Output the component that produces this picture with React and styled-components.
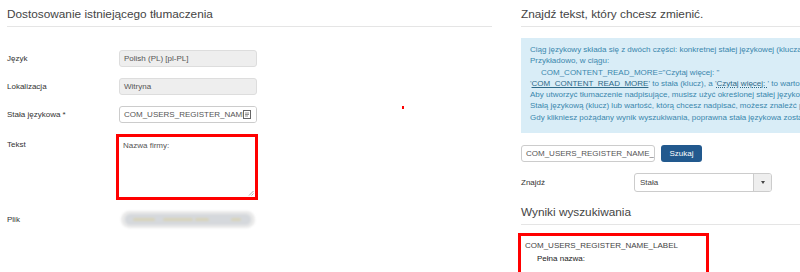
import React from "react";
import styled, { createGlobalStyle } from "styled-components";

const GlobalStyle = createGlobalStyle`
  html, body {
    margin: 0;
    padding: 0;
    background: #fff;
    width: 800px;
    height: 272px;
    overflow: hidden;
    font-family: "Liberation Sans", Arial, sans-serif;
  }
`;

const Page = styled.div`
  position: relative;
  display: flex;
  align-items: flex-start;
  padding-left: 7px;
  width: 1000px;
  height: 272px;
`;

const Column = styled.div`
  flex-shrink: 0;
  width: ${(p) => p.$width}px;
  margin-right: ${(p) => p.$gap || 0}px;
`;

const Heading = styled.h2`
  margin: ${(p) => p.$top || 0}px 0 0;
  padding: 7px 0 4px;
  font-size: 11.8px;
  line-height: 15px;
  font-weight: normal;
  color: #444;
  border-bottom: 1px solid #e5e5e5;
  white-space: nowrap;
`;

const Form = styled.div`
  display: flex;
  flex-direction: column;
  gap: 11px;
  margin-top: 23px;
`;

const Row = styled.div`
  display: flex;
  align-items: flex-start;
`;

const Label = styled.div`
  width: ${(p) => p.$width || 112}px;
  padding-top: ${(p) => p.$pad || 0}px;
  font-size: 8px;
  line-height: 17px;
  color: #333;
  flex-shrink: 0;
`;

const Input = styled.div`
  position: relative;
  box-sizing: border-box;
  width: ${(p) => p.$width || 138}px;
  height: 17px;
  padding: 0 4px;
  border: 1px solid ${(p) => (p.$readonly ? "#ddd" : "#ccc")};
  border-radius: 3px;
  background: ${(p) => (p.$readonly ? "#eee" : "#fff")};
  font-size: 8px;
  line-height: 15px;
  color: #555;
  white-space: nowrap;
  overflow: hidden;
`;

const InputIcon = styled.span`
  position: absolute;
  right: 0;
  top: 0;
  bottom: 0;
  width: 13px;
  display: flex;
  align-items: center;
  background: #fff;
`;

const TextArea = styled.div`
  position: relative;
  box-sizing: border-box;
  width: 142px;
  height: 66px;
  margin-left: -3px;
  padding: 3px 4px;
  border: 3px solid #f00;
  background: #fff;
  font-size: 8px;
  line-height: 11px;
  color: #555;
`;

const Grip = styled.svg`
  position: absolute;
  right: 1px;
  bottom: 1px;
`;

const Blurred = styled.div`
  box-sizing: border-box;
  width: 134px;
  height: 17px;
  margin-left: 2px;
  padding: 3px 4px;
  border-radius: 9px;
  background: #e9e9e9;
  filter: blur(1.2px);
`;

const BlurBar = styled.div`
  display: flex;
  align-items: center;
  gap: 8px;
  height: 11px;
  padding: 0 8px;
  border-radius: 6px;
  background: #d5d8dc;
`;

const Blob = styled.span`
  height: 3px;
  width: ${(p) => p.$w}px;
  margin-left: ${(p) => p.$ml || 0}px;
  border-radius: 2px;
  background: #d8d3ba;
`;

const Dot = styled.span`
  position: absolute;
  left: 402px;
  top: 106px;
  width: 2px;
  height: 3px;
  background: #f00;
`;

const Info = styled.div`
  margin-top: 11px;
  padding: 6px 0 10px 9px;
  background: #d9edf7;
  color: #3a87ad;
  font-size: 8px;
  line-height: 11.3px;
  white-space: nowrap;
`;

const Line = styled.div`
  padding-left: ${(p) => p.$indent || 0}px;
`;

const Key = styled.span`
  text-decoration: underline;
  text-decoration-style: ${(p) => (p.$dotted ? "dotted" : "solid")};
  color: #2d6987;
`;

const SearchRow = styled.div`
  display: flex;
  align-items: center;
  gap: ${(p) => p.$gap || 0}px;
  margin-top: ${(p) => p.$top || 0}px;
`;

const Button = styled.div`
  width: 41px;
  height: 17px;
  border-radius: 3px;
  background: #22598e;
  color: #fff;
  font-size: 8px;
  line-height: 17px;
  text-align: center;
`;

const Select = styled.div`
  display: flex;
  box-sizing: border-box;
  width: 138px;
  height: 19px;
  border: 1px solid #ccc;
  border-radius: 3px;
  background: #fff;
  font-size: 8px;
  line-height: 17px;
  color: #444;
  overflow: hidden;
`;

const SelectValue = styled.div`
  flex: 1;
  padding-left: 5px;
`;

const Caret = styled.div`
  display: flex;
  align-items: center;
  justify-content: center;
  width: 17px;
  border-left: 1px solid #ccc;
  background: #eee;

  &::after {
    content: "";
    border-left: 2.5px solid transparent;
    border-right: 2.5px solid transparent;
    border-top: 3px solid #444;
  }
`;

const Result = styled.div`
  box-sizing: border-box;
  width: 191px;
  height: 42px;
  margin: 8px 0 0 -3px;
  padding: 4px 4px;
  border: 3px solid #f00;
  font-size: 8px;
  line-height: 12.5px;
  color: #444;
`;

const ResultValue = styled.div`
  padding-left: 12px;
  color: #222;
`;

export default function App() {
  return (
    <>
      <GlobalStyle />
      <Page>
        <Column $width={485} $gap={29}>
          <Heading>Dostosowanie istniejącego tłumaczenia</Heading>
          <Form>
            <Row>
              <Label>Język</Label>
              <Input $readonly>Polish (PL) [pl-PL]</Input>
            </Row>
            <Row>
              <Label>Lokalizacja</Label>
              <Input $readonly>Witryna</Input>
            </Row>
            <Row>
              <Label>Stała językowa *</Label>
              <Input>
                COM_USERS_REGISTER_NAME
                <InputIcon>
                  <svg width="8" height="9" viewBox="0 0 8 9">
                    <rect x="0.5" y="0.5" width="7" height="8" fill="#fff" stroke="#666" />
                    <path d="M2 3h4M2 4.5h4M2 6h3" stroke="#777" strokeWidth="0.8" />
                  </svg>
                </InputIcon>
              </Input>
            </Row>
            <Row>
              <Label $pad={2}>Tekst</Label>
              <TextArea>
                Nazwa firmy:
                <Grip width="6" height="6" viewBox="0 0 6 6">
                  <path d="M5.5 1L1 5.5M5.5 3.5L3.5 5.5" stroke="#999" strokeWidth="0.8" />
                </Grip>
              </TextArea>
            </Row>
            <Row>
              <Label>Plik</Label>
              <Blurred>
                <BlurBar>
                  <Blob $w={22} />
                  <Blob $w={30} />
                  <Blob $w={14} $ml={-6} />
                  <Blob $w={10} $ml={14} />
                </BlurBar>
              </Blurred>
            </Row>
          </Form>
        </Column>
        <Column $width={460}>
          <Heading>Znajdź tekst, który chcesz zmienić.</Heading>
          <Info>
            <Line>
              Ciąg językowy składa się z dwóch części: konkretnej stałej językowej (klucza) i jej
              wartości.
            </Line>
            <Line>Przykładowo, w ciągu:</Line>
            <Line $indent={11}>COM_CONTENT_READ_MORE="Czytaj więcej: "</Line>
            <Line>
              '<Key>COM_CONTENT_READ_MORE</Key>' to stała (klucz), a '<Key $dotted>Czytaj więcej: </Key>' to
              wartość.
            </Line>
            <Line>
              Aby utworzyć tłumaczenie nadpisujące, musisz użyć określonej stałej językowej.
            </Line>
            <Line>
              Stałą językową (klucz) lub wartość, którą chcesz nadpisać, możesz znaleźć poniżej.
            </Line>
            <Line>
              Gdy klikniesz pożądany wynik wyszukiwania, poprawna stała językowa zostanie dodana do
              formularza.
            </Line>
          </Info>
          <SearchRow $top={12} $gap={6}>
            <Input $width={134}>COM_USERS_REGISTER_NAME_</Input>
            <Button>Szukaj</Button>
          </SearchRow>
          <SearchRow $top={11}>
            <Label $width={113}>Znajdź</Label>
            <Select>
              <SelectValue>Stała</SelectValue>
              <Caret />
            </Select>
          </SearchRow>
          <Heading $top={6}>Wyniki wyszukiwania</Heading>
          <Result>
            <div>COM_USERS_REGISTER_NAME_LABEL</div>
            <ResultValue>Pełna nazwa:</ResultValue>
          </Result>
        </Column>
        <Dot />
      </Page>
    </>
  );
}
